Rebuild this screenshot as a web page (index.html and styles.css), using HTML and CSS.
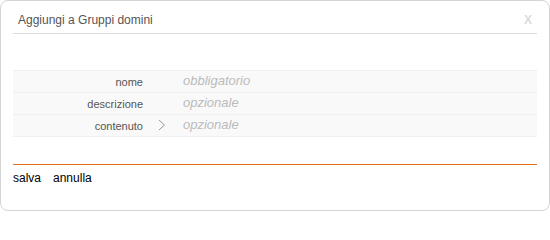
FILE: index.html
```html
<!DOCTYPE html>
<html lang="it">
<head>
<meta charset="utf-8">
<title>Aggiungi a Gruppi domini</title>
<link rel="stylesheet" href="styles.css">
</head>
<body>
<div class="dialog">
  <div class="header">
    <span class="title">Aggiungi a Gruppi domini</span>
    <span class="close">X</span>
  </div>
  <div class="form">
    <div class="row">
      <div class="label">nome</div>
      <div class="arrow"></div>
      <div class="value">obbligatorio</div>
    </div>
    <div class="row">
      <div class="label">descrizione</div>
      <div class="arrow"></div>
      <div class="value">opzionale</div>
    </div>
    <div class="row">
      <div class="label">contenuto</div>
      <div class="arrow"><svg width="8" height="12" viewBox="0 0 8 12"><path d="M1 1 L6.5 6 L1 11" fill="none" stroke="#999" stroke-width="1"/></svg></div>
      <div class="value">opzionale</div>
    </div>
  </div>
  <div class="actions">
    <span class="btn">salva</span>
    <span class="btn">annulla</span>
  </div>
</div>
</body>
</html>
```

FILE: styles.css
```css
html, body {
  margin: 0;
  padding: 0;
  background: #fff;
}
body {
  font-family: "Liberation Sans", Arial, sans-serif;
}
.dialog {
  box-sizing: border-box;
  width: 550px;
  height: 211px;
  border: 1px solid #d4d4d4;
  border-radius: 8px;
  padding: 0 12px;
  background: #fff;
}
.header {
  display: flex;
  justify-content: space-between;
  align-items: center;
  height: 32px;
  border-bottom: 1px solid #dcdcdc;
  padding: 0 5px 0 5px;
}
.title {
  font-size: 12px;
  color: #555;
  padding-top: 5px;
}
.close {
  font-size: 12px;
  font-weight: bold;
  color: #dcdcdc;
  padding-top: 5px;
  padding-right: 0;
}
.form {
  margin-top: 36px;
  border-bottom: 1px solid #f0f0f0;
}
.row {
  display: flex;
  align-items: center;
  height: 21px;
  border-top: 1px solid #f0f0f0;
  background: #f9f9f9;
}
.label {
  width: 130px;
  text-align: right;
  font-size: 11px;
  color: #555;
}
.arrow {
  width: 40px;
  display: flex;
  justify-content: center;
  align-items: center;
  padding-bottom: 2px;
  box-sizing: border-box;
}
.arrow svg {
  display: block;
  margin-left: -3px;
}
.value {
  font-size: 13px;
  font-style: italic;
  color: #bbb;
  padding-bottom: 3px;
}
.actions {
  margin-top: 27px;
  border-top: 1px solid #e2701c;
  padding-top: 6px;
  display: flex;
  gap: 12px;
}
.btn {
  font-size: 12px;
  color: #000;
}
```
